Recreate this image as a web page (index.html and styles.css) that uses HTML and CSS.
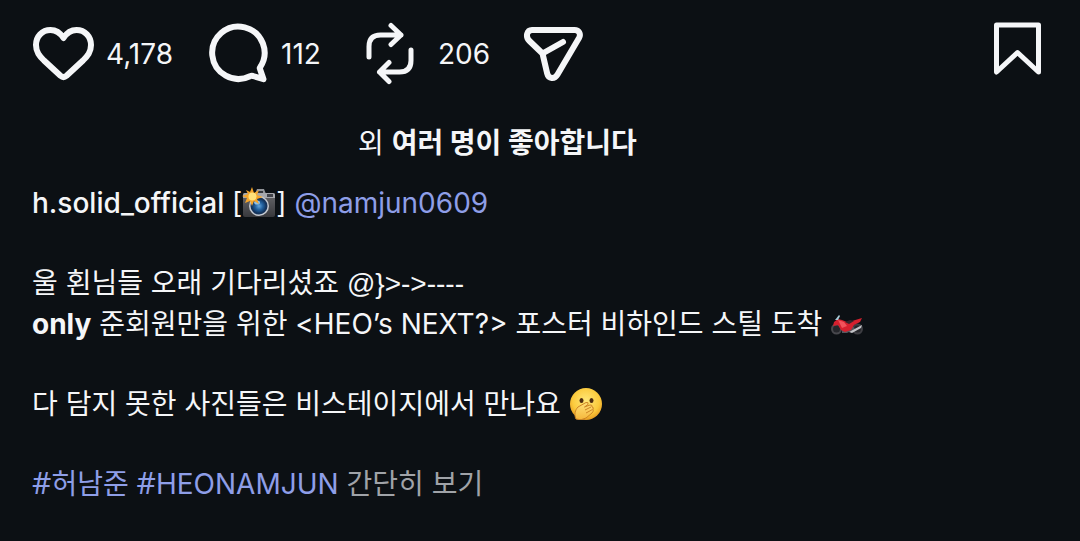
FILE: index.html
```html
<!DOCTYPE html>
<html lang="ko">
<head>
<meta charset="utf-8">
<meta name="viewport" content="width=device-width, initial-scale=1">
<title>h.solid_official</title>
<link rel="stylesheet" href="styles.css">
</head>
<body>
<main class="post">
  <div class="actions">
    <div class="action-group">
      <button class="action" type="button" aria-label="좋아요 4,178">
        <svg class="icon" viewBox="32 22 62 64"><path d="M63.500 38C60 32.500 55.500 30 50.500 30C42 30 36 36.500 36 45C36 52 39.500 56 44 60.500L60.500 75.800Q63.500 78.400 66.500 75.800L83 60.500C87.500 56 91 52 91 45C91 36.500 85 30 76.500 30C71.500 30 67 32.500 63.500 38Z"/></svg>
        <span>4,178</span>
      </button>
      <button class="action" type="button" aria-label="댓글 112">
        <svg class="icon" viewBox="207 22 62 64"><path d="M260 67.500A26.200 26.200 0 1 0 250 76.200Q251.500 75.600 253 76L263.500 79.200L260 69Q259.500 68 260 67.500Z"/></svg>
        <span>112</span>
      </button>
      <button class="action" type="button" aria-label="리포스트 206">
        <svg class="icon icon-thin" viewBox="364 22 62 64"><path d="M369 57V46.500Q369 35 380.500 35H401M391 25.500L401 35L391 44.500M411 50V60.500Q411 72 399.500 72H379.500M389 62.500L379.500 72L389 81.500"/></svg>
        <span>206</span>
      </button>
      <button class="action" type="button" aria-label="공유">
        <svg class="icon" viewBox="523 22 62 64"><path d="M532 30H574.500C579 30 581.200 34 579 38L557.500 74.500C554.500 79.500 548.500 79 547.200 73.500L542.500 53.500L529.500 41C525 36.500 527 30 532 30ZM542.500 53.500L563 42"/></svg>
      </button>
    </div>
    <button class="action" type="button" aria-label="저장">
      <svg class="icon icon-thin icon-save" viewBox="993 22 50 64"><path d="M996.500 25H1038.500V72L1017.500 52.500L996.500 72Z"/></svg>
    </button>
  </div>

  <p class="likes">외 <strong>여러 명이 좋아합니다</strong></p>

  <div class="caption">
    <p><a class="author" href="#">h.solid_official</a> [<svg class="emoji" viewBox="0 0 34 32" role="img" aria-label="플래시 카메라">
        <defs>
          <linearGradient id="body" x2="0" y2="1"><stop stop-color="#68686c"/><stop offset="1" stop-color="#38383c"/></linearGradient>
          <radialGradient id="lens"><stop stop-color="#63a5dc"/><stop offset=".55" stop-color="#23619e"/><stop offset="1" stop-color="#123763"/></radialGradient>
        </defs>
        <path d="M13 7L15 2H22L24 7Z" fill="#929499"/><path d="M16 4H21V7H15Z" fill="#34363b"/>
        <rect x="1" y="6" width="32" height="24" rx="2" fill="url(#body)"/>
        <path d="M1 11V8Q1 6 3 6H31Q33 6 33 8V11Z" fill="#a7a8ad"/><rect x="25" y="7" width="6" height="3" fill="#42434a"/>
        <circle cx="17" cy="19" r="10" fill="#c6cad1"/><circle cx="17" cy="19" r="8.500" fill="#17345b"/><circle cx="17" cy="19" r="7" fill="url(#lens)"/>
        <ellipse cx="15" cy="15.500" rx="3" ry="2" fill="#91bfe3"/>
        <path d="M10 0L12 6L17 3L15 8L21 10L15 12L17 17L12 14L10 19L8 14L3 16L5 11L0 9L6 7L4 3L8 5Z" fill="#f5a52b"/><circle cx="10.500" cy="9.500" r="4" fill="#ffe17a"/>
      </svg>] <a class="link" href="#">@namjun0609</a></p>
    <p class="paragraph">울 횐님들 오래 기다리셨죠 <span class="rose">@}&gt;-&gt;----</span></p>
    <p><strong>only</strong> 준회원만을 위한 &lt;HEO’s NEXT?&gt; 포스터 비하인드 스틸 도착 <svg class="emoji" viewBox="0 0 34 32" role="img" aria-label="오토바이">
        <circle cx="6.500" cy="21" r="4.500" fill="#25262b" stroke="#48484d" stroke-width="2"/><circle cx="27.500" cy="21" r="4.500" fill="#25262b" stroke="#3e3e43" stroke-width="2"/>
        <path d="M12 19L22 17L25 21L17 25H12Z" fill="#57575e"/>
        <path d="M4 14L8 11L12 12L17 14L22 13L32 10L30 14L24 17L21 22L15 24L11 22L8 17L3 18Z" fill="#d5202e"/>
        <path d="M8 12L14 14L17 18L12 20Z" fill="#f1525b"/><path d="M15 14L20 12L24 13L19 16Z" fill="#33262d"/>
        <path d="M5 12L9 7L10 8L8 12Z" fill="#a7cbd8"/><path d="M19 24L32 17L31 20L22 25Z" fill="#c4c4c8"/>
      </svg></p>
    <p class="paragraph">다 담지 못한 사진들은 비스테이지에서 만나요 <svg class="emoji" viewBox="0 0 34 32" role="img" aria-label="손으로 입을 가린 얼굴">
        <defs>
          <radialGradient id="face" cx=".5" cy=".4" r=".6"><stop stop-color="#ffe778"/><stop offset=".7" stop-color="#fbca3c"/><stop offset="1" stop-color="#e69b22"/></radialGradient>
          <linearGradient id="hand" x2="0" y2="1"><stop stop-color="#ffe078"/><stop offset="1" stop-color="#f5b73b"/></linearGradient>
        </defs>
        <circle cx="17" cy="16" r="16" fill="url(#face)"/>
        <ellipse cx="12.500" cy="12.500" rx="2" ry="2.500" fill="#4c2b10"/><ellipse cx="22.500" cy="12.500" rx="2" ry="2.500" fill="#4c2b10"/>
        <path d="M7 31C5 27 6 22 9 19L17 14.500Q20 14 19 16.500L15.500 19L21 17Q23.500 16.500 23 19Q25 19 24 21.500Q25 23 23 25L17 30Q12 33 7 31Z" fill="url(#hand)" stroke="#ce8424" stroke-width="1"/>
        <path d="M16 22L22 19M17 25L23.500 21.500" fill="none" stroke="#ce8424"/>
      </svg></p>
    <p class="paragraph"><a class="link" href="#"><span class="hash">#</span>허남준</a> <a class="link" href="#"><span class="hash">#</span>HEONAMJUN</a> <button class="less" type="button">간단히 보기</button></p>
  </div>
</main>
</body>
</html>
```
FILE: styles.css
```css
* {
  box-sizing: border-box;
}

body {
  margin: 0;
  background: #0c1014;
  color: #f5f6f8;
  font-family: Inter, "Noto Sans CJK KR", sans-serif;
  font-size: 28px;
  line-height: 40px;
}

p {
  margin: 0;
}

strong {
  font-weight: 700;
}

button {
  padding: 0;
  border: 0;
  background: none;
  color: inherit;
  font: inherit;
  cursor: pointer;
}

a {
  color: inherit;
  text-decoration: none;
}

.post {
  padding: 22px 32px 36px;
}

.actions {
  display: flex;
  justify-content: space-between;
  margin-right: 5px;
}

.action-group {
  display: grid;
  grid-template-columns: 175px 157px 159px 62px;
}

.action {
  display: flex;
  align-items: center;
  gap: 12px;
}

.icon {
  width: 62px;
  height: 64px;
  fill: none;
  stroke: currentColor;
  stroke-width: 6;
  stroke-linecap: round;
  stroke-linejoin: round;
}

.icon-thin {
  stroke-width: 5;
}

.icon-save {
  width: 50px;
}

.likes {
  margin-top: 37px;
  padding-left: 326px;
}

.caption {
  margin-top: 20px;
}

.paragraph {
  margin-top: 40px;
}

.author {
  font-weight: 500;
}

.link {
  color: #8e9ee8;
}

.rose {
  font-family: "Liberation Sans", sans-serif;
}

.hash {
  font-family: "Noto Sans", sans-serif;
  font-size: 30px;
  line-height: 1;
}

.less {
  color: #a0a3a8;
}

.emoji {
  width: 34px;
  height: 32px;
  vertical-align: -6px;
}
```
